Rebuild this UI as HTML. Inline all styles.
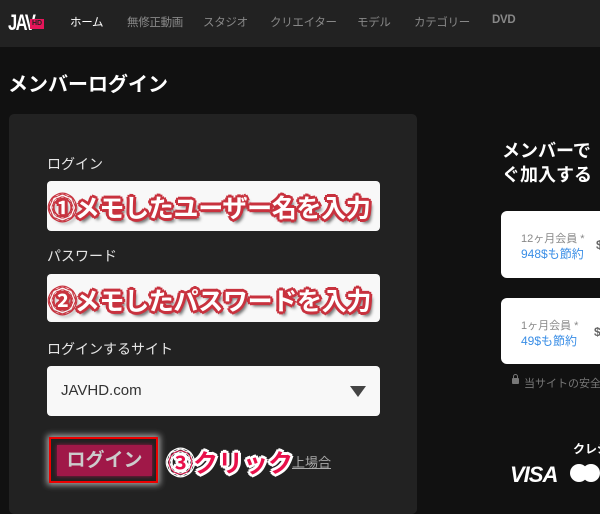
<!DOCTYPE html>
<html><head><meta charset="utf-8"><style>
*{margin:0;padding:0;box-sizing:border-box}
body{width:600px;height:499px;overflow:hidden;background:#111;font-family:"Liberation Sans","Noto Sans CJK JP",sans-serif;position:relative}
.a{position:absolute;white-space:nowrap}
.nav{position:absolute;left:0;top:0;width:600px;height:47px;background:#222}
.ni{position:absolute;top:14px;font-size:11.5px;color:#888;letter-spacing:-0.3px}
.lbl{font-size:14px;color:#e6e6e6}
.inp{position:absolute;left:47px;width:333px;background:#f8f8f8;border-radius:4px}
.ann{font-size:25px;font-weight:bold;color:#fff;letter-spacing:-0.3px;
text-shadow:-2px -2px 0 #c8323e,2px -2px 0 #c8323e,-2px 2px 0 #c8323e,2px 2px 0 #c8323e,0 -3px 0 #c8323e,0 3px 0 #c8323e,-3px 0 0 #c8323e,3px 0 0 #c8323e,3px 4px 3px #555}
.ann2{font-size:25px;font-weight:bold;color:#e8104a;
text-shadow:-2px -2px 0 #fff,2px -2px 0 #fff,-2px 2px 0 #fff,2px 2px 0 #fff,0 -3px 0 #fff,0 3px 0 #fff,-3px 0 0 #fff,3px 0 0 #fff}
.card{position:absolute;left:501px;width:110px;background:#fff;border-radius:6px}
</style></head><body>
<div class="nav"></div>
<div class="a" style="left:8px;top:10px;font-size:22px;font-weight:bold;color:#fff;letter-spacing:-2px;transform:scaleX(0.75);transform-origin:left">JAV</div>
<div class="a" style="left:30px;top:19px;width:14px;height:10px;background:#e6155a;color:#222;font-size:7px;font-weight:bold;text-align:center;line-height:10px">HD</div>
<div class="ni" style="left:70px;color:#fff">ホーム</div>
<div class="ni" style="left:127px">無修正動画</div>
<div class="ni" style="left:203px">スタジオ</div>
<div class="ni" style="left:270px">クリエイター</div>
<div class="ni" style="left:357px">モデル</div>
<div class="ni" style="left:414px">カテゴリー</div>
<div class="ni" style="left:492px;font-weight:bold">DVD</div>
<div class="a" style="left:8px;top:68px;font-size:20px;font-weight:bold;color:#fff">メンバーログイン</div>
<div class="a" style="left:9px;top:114px;width:408px;height:400px;background:#222;border-radius:5px"></div>
<div class="a lbl" style="left:47px;top:154px">ログイン</div>
<div class="inp" style="top:181px;height:50px"></div>
<div class="a ann" style="left:50px;top:189px">①メモしたユーザー名を入力</div>
<div class="a lbl" style="left:47px;top:246px">パスワード</div>
<div class="inp" style="top:274px;height:48px"></div>
<div class="a ann" style="left:50px;top:282px">②メモしたパスワードを入力</div>
<div class="a lbl" style="left:47px;top:339px">ログインするサイト</div>
<div class="inp" style="top:366px;height:50px"></div>
<div class="a" style="left:61px;top:382px;font-size:15px;color:#333">JAVHD.com</div>
<div class="a" style="left:350px;top:386px;width:0;height:0;border-left:8px solid transparent;border-right:8px solid transparent;border-top:11px solid #444"></div>
<div class="a" style="left:49px;top:437px;width:109px;height:46px;border:2px solid #e00;box-shadow:0 0 6px 2px rgba(255,255,255,.6)"></div>
<div class="a" style="left:57px;top:445px;width:95px;height:31px;background:#a01848;box-shadow:0 0 4px #a01848;color:#ccc;font-size:19px;font-weight:bold;text-align:center;line-height:31px">ログイン</div>
<div class="a" style="left:292px;top:452px;font-size:13px;color:#aaa;text-decoration:underline">上場合</div>
<div class="a ann2" style="left:168px;top:444px">③クリック</div>
<div class="a" style="left:502px;top:139px;font-size:18px;font-weight:bold;color:#fff;line-height:24px">メンバーで<br>ぐ加入する</div>
<div class="card" style="top:211px;height:67px"></div>
<div class="a" style="left:521px;top:230px;font-size:11px;color:#888">12ヶ月会員 *</div>
<div class="a" style="left:521px;top:245px;font-size:12px;color:#3a8ee6">948$も節約</div>
<div class="a" style="left:596px;top:238px;font-size:12px;color:#666;font-weight:bold">$</div>
<div class="card" style="top:298px;height:66px"></div>
<div class="a" style="left:521px;top:317px;font-size:11px;color:#888">1ヶ月会員 *</div>
<div class="a" style="left:521px;top:332px;font-size:12px;color:#3a8ee6">49$も節約</div>
<div class="a" style="left:594px;top:325px;font-size:12px;color:#666;font-weight:bold">$</div>
<div class="a" style="left:512px;top:378px;width:7px;height:6px;background:#777;border-radius:1px"></div>
<div class="a" style="left:513px;top:374px;width:5px;height:6px;border:1.5px solid #777;border-radius:3px 3px 0 0"></div>
<div class="a" style="left:524px;top:375px;font-size:11px;color:#777">当サイトの安全な</div>
<div class="a" style="left:573px;top:440px;font-size:12px;font-weight:bold;color:#fff">クレジ</div>
<div class="a" style="left:510px;top:462px;font-size:22px;font-weight:bold;font-style:italic;color:#fff;letter-spacing:-1px">VISA</div>
<div class="a" style="left:570px;top:464px;width:18px;height:18px;border-radius:50%;background:#fff"></div>
<div class="a" style="left:582px;top:464px;width:18px;height:18px;border-radius:50%;background:#fff"></div>
</body></html>
